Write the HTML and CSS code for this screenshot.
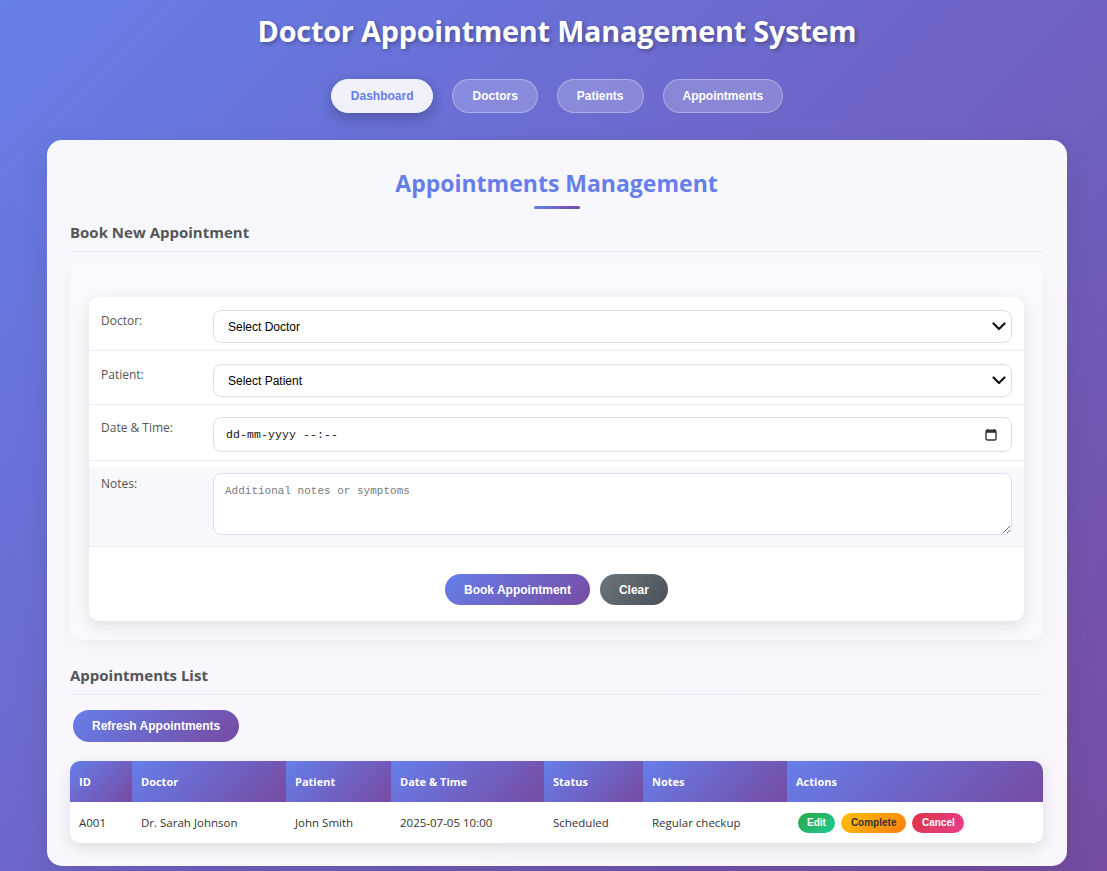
FILE: index.html
```html
<!DOCTYPE html>
<html lang="en">
<head>
<meta charset="utf-8">
<title>Doctor Appointment Management System</title>
<link rel="stylesheet" href="styles.css">
</head>
<body>
<div class="app">
  <header class="header">
    <h1 class="title">Doctor Appointment Management System</h1>
    <nav class="nav">
      <button class="nav-btn active">Dashboard</button>
      <button class="nav-btn">Doctors</button>
      <button class="nav-btn">Patients</button>
      <button class="nav-btn">Appointments</button>
    </nav>
  </header>

  <main class="card">
    <h2 class="page-title">Appointments Management</h2>
    <div class="title-bar"></div>

    <h3 class="section-title">Book New Appointment</h3>
    <section class="form-section">
      <div class="form-card">
        <div class="form-row">
          <label class="form-label">Doctor:</label>
          <div class="select-wrap">
            <select class="field select"><option>Select Doctor</option></select>
            <svg class="chevron" viewBox="0 0 14 9" width="14" height="9"><path d="M1.5 1.5 L7 7 L12.5 1.5" fill="none" stroke="#111" stroke-width="2.2" stroke-linecap="round" stroke-linejoin="round"/></svg>
          </div>
        </div>
        <div class="form-row">
          <label class="form-label">Patient:</label>
          <div class="select-wrap">
            <select class="field select"><option>Select Patient</option></select>
            <svg class="chevron" viewBox="0 0 14 9" width="14" height="9"><path d="M1.5 1.5 L7 7 L12.5 1.5" fill="none" stroke="#111" stroke-width="2.2" stroke-linecap="round" stroke-linejoin="round"/></svg>
          </div>
        </div>
        <div class="form-row date-row">
          <label class="form-label">Date &amp; Time:</label>
          <div class="field date-field">
            <span class="date-text">dd-mm-yyyy --:--</span>
            <svg class="cal" viewBox="0 0 12 13" width="12" height="13"><path d="M2.5 1 V3 M9.5 1 V3" stroke="#333" stroke-width="1.4"/><rect x="1" y="2.2" width="10" height="9.8" rx="1.6" fill="none" stroke="#333" stroke-width="1.4"/><rect x="1" y="2.2" width="10" height="2.6" fill="#333"/></svg>
          </div>
        </div>
        <div class="form-row notes-row">
          <label class="form-label">Notes:</label>
          <textarea class="field textarea" placeholder="Additional notes or symptoms"></textarea>
        </div>
        <div class="form-actions">
          <button class="btn btn-primary">Book Appointment</button>
          <button class="btn btn-secondary">Clear</button>
        </div>
      </div>
    </section>

    <h3 class="section-title list-title">Appointments List</h3>
    <button class="btn btn-primary refresh">Refresh Appointments</button>

    <div class="table-wrap">
      <table class="table">
        <thead>
          <tr>
            <th class="c-id">ID</th>
            <th class="c-doc">Doctor</th>
            <th class="c-pat">Patient</th>
            <th class="c-date">Date &amp; Time</th>
            <th class="c-status">Status</th>
            <th class="c-notes">Notes</th>
            <th class="c-actions">Actions</th>
          </tr>
        </thead>
        <tbody>
          <tr>
            <td>A001</td>
            <td>Dr. Sarah Johnson</td>
            <td>John Smith</td>
            <td>2025-07-05 10:00</td>
            <td>Scheduled</td>
            <td>Regular checkup</td>
            <td>
              <div class="actions">
                <button class="pill pill-edit">Edit</button>
                <button class="pill pill-complete">Complete</button>
                <button class="pill pill-cancel">Cancel</button>
              </div>
            </td>
          </tr>
        </tbody>
      </table>
    </div>
  </main>
</div>
</body>
</html>
```

FILE: styles.css
```css
* { box-sizing: border-box; }

html, body {
  margin: 0;
  padding: 0;
}

body {
  min-height: 100vh;
  background: linear-gradient(135deg, #667eea 0%, #764ba2 100%);
  font-family: "Open Sans", "Noto Sans", sans-serif;
  color: #333;
}

.app {
  padding: 0 40px 30px 47px;
}

.header {
  display: flex;
  flex-direction: column;
  align-items: center;
  padding-top: 11px;
}

.title {
  margin: 0;
  font-size: 28.8px;
  line-height: 40px;
  font-weight: 700;
  color: #fff;
  text-shadow: 2px 2px 4px rgba(0, 0, 0, 0.3);
  letter-spacing: -0.2px;
}

.nav {
  display: flex;
  gap: 19px;
  margin-top: 28px;
}

.nav-btn {
  height: 34px;
  padding: 0 19px;
  border-radius: 17px;
  border: 1px solid rgba(255, 255, 255, 0.3);
  background: rgba(255, 255, 255, 0.2);
  color: #fff;
  font-family: "Liberation Sans", Arial, sans-serif;
  font-size: 12px;
  font-weight: 700;
}

.nav-btn.active {
  background: #f1f1fb;
  color: #667eea;
  border-color: #f1f1fb;
  box-shadow: 0 5px 15px rgba(0, 0, 0, 0.25);
}

.card {
  margin-top: 27px;
  background: rgba(255, 255, 255, 0.95);
  border-radius: 15px;
  padding: 28px 24px 23px 23px;
  box-shadow: 0 10px 30px rgba(0, 0, 0, 0.1);
}

.page-title {
  margin: 0;
  text-align: center;
  font-size: 23px;
  line-height: 31px;
  font-weight: 700;
  color: #667eea;
}

.title-bar {
  width: 46px;
  height: 3px;
  margin: 7px auto 0;
  border-radius: 2px;
  background: linear-gradient(90deg, #667eea, #764ba2);
}

.section-title {
  margin: 13px 0 0;
  padding-bottom: 9px;
  font-size: 15px;
  line-height: 20px;
  font-weight: 700;
  color: #555;
  border-bottom: 1px solid #e9e9f1;
}

.form-section {
  margin-top: 11px;
  padding: 34px 19px 19px;
  background: #f9f9fd;
  border-radius: 10px;
  box-shadow: 0 5px 15px rgba(0, 0, 0, 0.04);
}

.form-card {
  background: #fff;
  border-radius: 10px;
  box-shadow: 0 5px 15px rgba(0, 0, 0, 0.1);
  overflow: hidden;
}

.form-row {
  display: flex;
  align-items: flex-start;
  padding: 13px 12px 7px;
  border-bottom: 1px solid #ececf4;
}

.date-row {
  padding: 12px 12px 8px;
}

.notes-row {
  margin-top: 6px;
  padding: 6px 12px 11px;
  background: #f7f8fc;
}

.form-label {
  flex: 0 0 112px;
  padding-top: 2px;
  font-size: 12px;
  line-height: 18px;
  color: #555;
  font-weight: 500;
}

.field {
  flex: 1;
  border: 1px solid #dcdff1;
  border-radius: 8px;
  background: #fff;
  color: #000;
}

.select-wrap {
  flex: 1;
  position: relative;
  display: flex;
}

.select {
  appearance: none;
  -webkit-appearance: none;
  height: 33px;
  padding: 0 14px;
  font-family: "Liberation Sans", Arial, sans-serif;
  font-size: 12px;
  outline: none;
}

.chevron {
  position: absolute;
  right: 6px;
  top: 12px;
  pointer-events: none;
}

.date-field {
  height: 35px;
  display: flex;
  align-items: center;
  justify-content: space-between;
  padding: 0 14px 0 12px;
}

.date-text {
  font-family: "Liberation Mono", "DejaVu Sans Mono", monospace;
  font-size: 11.5px;
  color: #111;
  letter-spacing: 0.1px;
}

.cal {
  display: block;
}

.textarea {
  height: 62px;
  padding: 11px 11px 9px;
  font-family: "Liberation Mono", "DejaVu Sans Mono", monospace;
  font-size: 11px;
  resize: vertical;
  outline: none;
}

.textarea::placeholder {
  color: #7a7a7a;
}

.form-actions {
  display: flex;
  justify-content: center;
  gap: 10px;
  padding: 27px 0 16px;
}

.btn {
  height: 31px;
  padding: 0 19px;
  border: none;
  border-radius: 16px;
  color: #fff;
  font-family: "Liberation Sans", Arial, sans-serif;
  font-size: 12px;
  font-weight: 700;
}

.btn-primary {
  background: linear-gradient(135deg, #667eea 0%, #764ba2 100%);
}

.btn-secondary {
  background: linear-gradient(135deg, #6c757d 0%, #495057 100%);
}

.list-title {
  margin-top: 25px;
}

.refresh {
  display: block;
  margin: 15px 0 0 3px;
  height: 32px;
  padding: 0 19px;
}

.table-wrap {
  margin-top: 19px;
  border-radius: 10px;
  overflow: hidden;
  background: #fff;
  box-shadow: 0 5px 15px rgba(0, 0, 0, 0.1);
}

.table {
  width: 100%;
  border-collapse: collapse;
  table-layout: fixed;
}

.table th {
  height: 41px;
  padding: 0 9px;
  text-align: left;
  color: #fff;
  font-size: 11px;
  font-weight: 700;
  background: linear-gradient(135deg, #667eea 0%, #764ba2 100%);
}

.table td {
  height: 41px;
  padding: 0 9px;
  font-size: 11.5px;
  color: #333;
}

.c-id { width: 62px; }
.c-doc { width: 154px; }
.c-pat { width: 105px; }
.c-date { width: 153px; }
.c-status { width: 99px; }
.c-notes { width: 144px; }
.c-actions { width: auto; }

.actions {
  display: flex;
  gap: 6.5px;
  padding-left: 2px;
}

.pill {
  height: 20px;
  padding: 0 9.5px;
  border: none;
  border-radius: 10px;
  font-family: "Liberation Sans", Arial, sans-serif;
  font-size: 10px;
  font-weight: 700;
  color: #fff;
}

.pill-edit { background: linear-gradient(135deg, #28a745, #20c997); padding: 0 9px; }
.pill-complete { background: linear-gradient(135deg, #ffc107, #fd7e14); color: #333; }
.pill-cancel { background: linear-gradient(135deg, #dc3545, #e83e8c); }
```
